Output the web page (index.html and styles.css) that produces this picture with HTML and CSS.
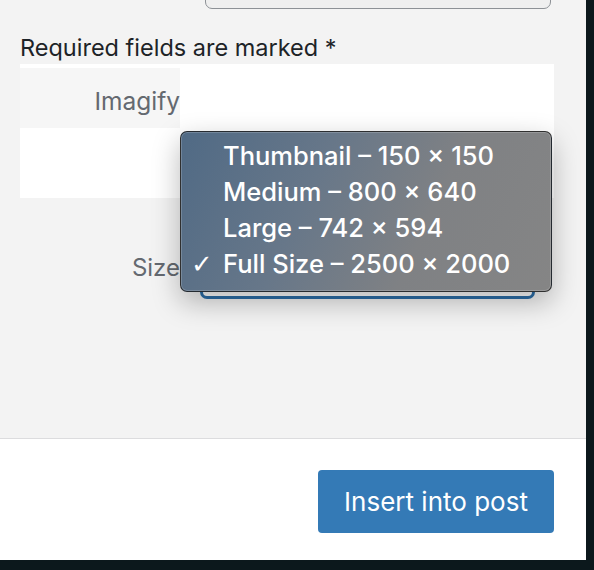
FILE: index.html
```html
<!DOCTYPE html>
<html>
<head>
<meta charset="utf-8">
<link rel="stylesheet" href="styles.css">
</head>
<body>
<div class="modal">
  <div class="content">
    <div class="prev-input"></div>
    <p class="required">Required fields are marked *</p>
    <div class="fields">
      <div class="row row-first">
        <div class="label-cell">Imagify</div>
        <div class="field-cell"></div>
      </div>
      <div class="row row-second">
        <div class="label-blank"></div>
        <div class="field-cell"></div>
      </div>
    </div>
    <div class="size-row">
      <div class="size-label">Size</div>
      <div class="select-box"></div>
    </div>
    <ul class="menu">
      <li class="item"><span class="check"></span>Thumbnail – 150 × 150</li>
      <li class="item"><span class="check"></span>Medium – 800 × 640</li>
      <li class="item"><span class="check"></span>Large – 742 × 594</li>
      <li class="item"><span class="check">✓</span>Full Size – 2500 × 2000</li>
    </ul>
  </div>
  <div class="footer">
    <button class="insert-btn">Insert into post</button>
  </div>
</div>
</body>
</html>
```
FILE: styles.css
```css
* { box-sizing: border-box; }
html, body { margin: 0; padding: 0; }
body {
  background: #0c181c;
  font-family: Inter, "Noto Sans", "Liberation Sans", sans-serif;
  width: 594px;
  height: 570px;
  overflow: hidden;
}
.modal {
  width: 586px;
  height: 560px;
  display: flex;
  flex-direction: column;
  background: #f3f3f3;
  overflow: hidden;
}
.content {
  position: relative;
  height: 439px;
  border-bottom: 1px solid #dcdcde;
  padding-top: 1px;
}
.prev-input {
  margin: -32px 0 0 205px;
  width: 346px;
  height: 40px;
  border: 1.5px solid #8d9196;
  border-radius: 7px;
  background: #efefef;
}
.required {
  margin: 24.5px 0 0 20px;
  font-size: 23.5px;
  line-height: 28px;
  color: #1d2327;
}
.fields {
  margin: 2px 0 0 20px;
  width: 534px;
  background: #fff;
  padding-top: 4px;
}
.row { display: flex; }
.row-first { height: 60px; }
.row-second { height: 70px; }
.label-cell {
  width: 160px;
  background: #f6f6f6;
  color: #646970;
  font-size: 24.5px;
  line-height: 28px;
  text-align: right;
  padding-top: 19px;
}
.label-blank { width: 160px; }
.field-cell { flex: 1; }
.size-row {
  display: flex;
  margin: 58px 0 0 20px;
  height: 43px;
}
.size-label {
  width: 160px;
  text-align: right;
  color: #646970;
  font-size: 24px;
  line-height: 24px;
}
.select-box {
  margin-left: 20px;
  width: 335px;
  height: 43px;
  border: 3px solid #2c6ea8;
  border-radius: 7px;
  background: #fff;
}
.menu {
  position: absolute;
  left: 180px;
  top: 131px;
  width: 372px;
  height: 161px;
  margin: 0;
  padding: 6px 0 0 0;
  list-style: none;
  border-radius: 7px;
  border: 1px solid rgba(20, 20, 20, 0.75);
  background: linear-gradient(115deg, #506a85 0%, #677789 35%, #7f8184 65%, #858585 100%);
  box-shadow: inset 0 0 0 1px rgba(255,255,255,0.18), 0 10px 28px rgba(0,0,0,0.28);
}
.item {
  display: flex;
  align-items: center;
  height: 36px;
  color: #fff;
  font-size: 25.5px;
  font-weight: 500;
  line-height: 36px;
  white-space: nowrap;
}
.check {
  width: 42px;
  padding-left: 10px;
  font-size: 26px;
  font-family: "DejaVu Sans", sans-serif;
  font-weight: normal;
}
.footer {
  flex: 1;
  background: #fff;
  display: flex;
  justify-content: flex-end;
  align-items: flex-start;
  padding: 31px 32px 0 0;
}
.insert-btn {
  width: 236px;
  height: 63px;
  border: none;
  border-radius: 4px;
  background: #347ab6;
  color: #fff;
  font-family: Inter, "Noto Sans", sans-serif;
  font-size: 26px;
  padding: 0;
}
```
